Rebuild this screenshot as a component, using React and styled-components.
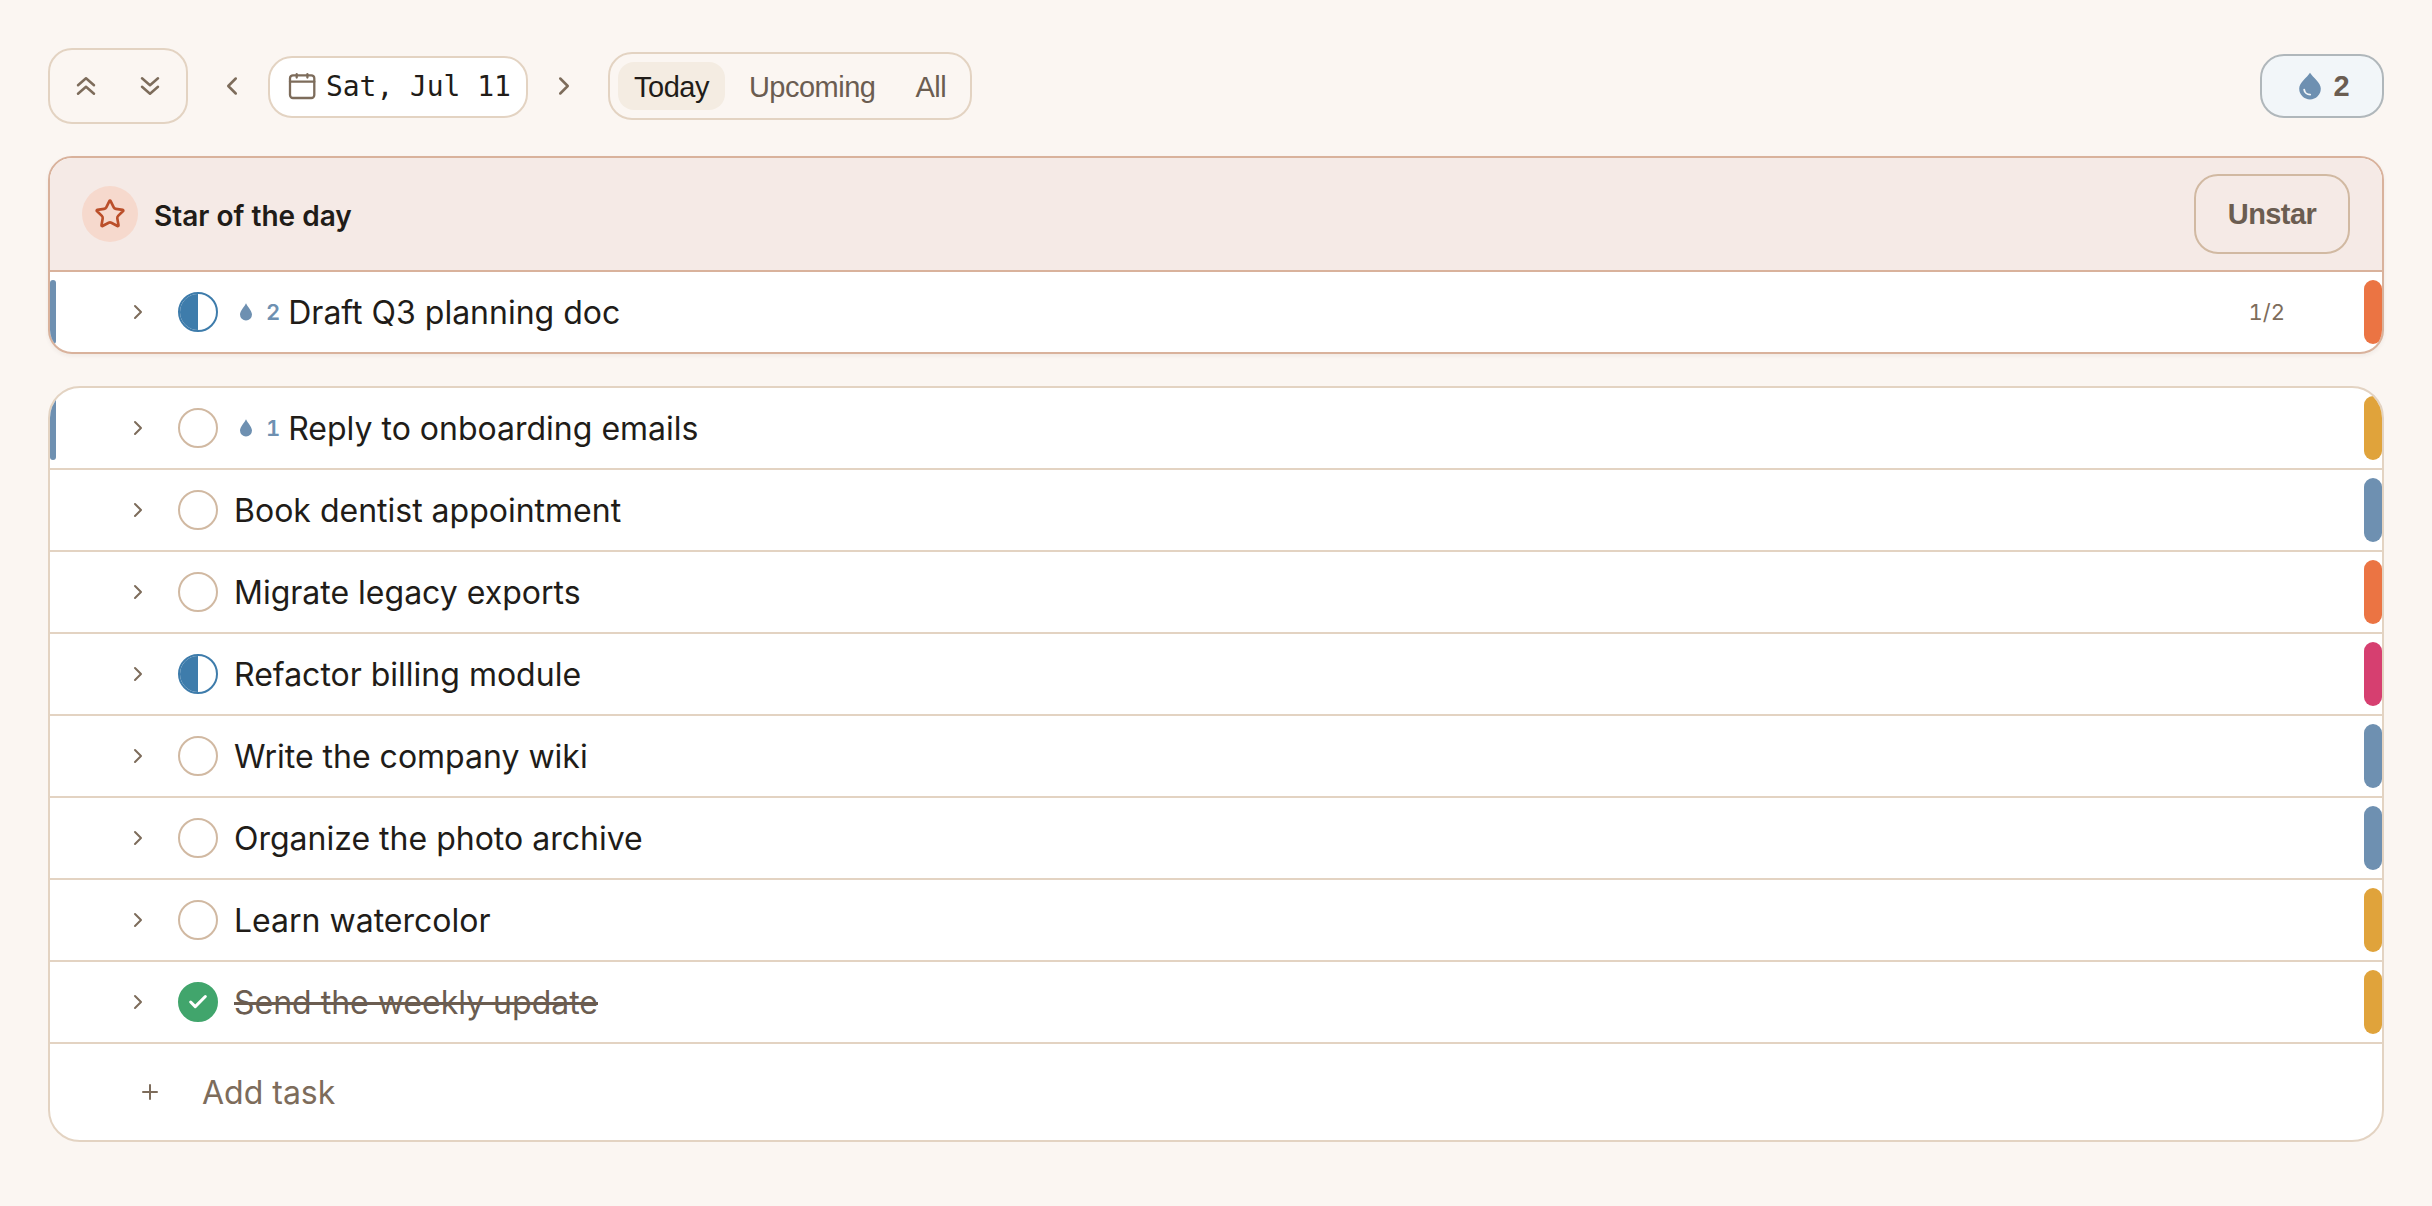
import React, { useState } from 'react';
import styled, { createGlobalStyle } from 'styled-components';
import {
  Check, ChevronLeft, ChevronRight, Plus, Star,
} from 'lucide-react';

const GlobalStyle = createGlobalStyle`
  * {
    box-sizing: border-box;
  }

  body {
    margin: 0;
    background: #fbf6f2;
    color: #211c18;
    font-family: Inter, sans-serif;
  }

  button {
    margin: 0;
    padding: 0;
    border: none;
    background: none;
    color: inherit;
    font: inherit;
    cursor: pointer;
  }

  svg {
    display: block;
    flex: none;
  }
`;

const Page = styled('main')`
  min-height: 1206px;
  padding: 48px;
`;

const Toolbar = styled('header')`
  height: 76px;
  display: flex;
  align-items: center;
  color: #7d6c5b;
`;

const FoldGroup = styled('div')`
  display: flex;
  padding: 4px;
  border: 2px solid #e3d3c2;
  border-radius: 24px;
`;

const FoldButton = styled('button')`
  width: 64px;
  height: 64px;
  display: flex;
  align-items: center;
  justify-content: center;
`;

const DateNav = styled('div')`
  display: flex;
  align-items: center;
  gap: 16px;
  margin: 0 24px;
`;

const StepButton = styled('button')`
  width: 40px;
  height: 40px;
  display: flex;
  align-items: center;
  justify-content: center;
`;

const DateButton = styled('button')`
  width: 260px;
  height: 62px;
  display: flex;
  align-items: center;
  gap: 10px;
  margin-top: 2px;
  padding-left: 18px;
  background: #fff;
  border: 2px solid #e3d3c2;
  border-radius: 24px;

  svg {
    margin-top: -2px;
  }
`;

const DateText = styled('span')`
  color: #211c18;
  font-family: "DejaVu Sans Mono", monospace;
  font-size: 28px;
  line-height: 36px;
  letter-spacing: -0.06px;
  white-space: pre;
`;

const Tabs = styled('nav')`
  display: flex;
  gap: 8px;
  padding: 8px;
  border: 2px solid #e3d3c2;
  border-radius: 24px;
`;

const Tab = styled('button')`
  height: 48px;
  padding: 2px 16px 0;
  border-radius: 16px;
  background: ${props => props.$active ? '#f4ece2' : 'transparent'};
  color: ${props => props.$active ? '#211c18' : '#6b5d51'};
  font-family: "Liberation Sans", sans-serif;
  font-size: 29px;
  letter-spacing: -0.5px;
`;

const DropCounter = styled('div')`
  width: 124px;
  height: 64px;
  margin-left: auto;
  padding-left: 5px;
  display: flex;
  align-items: center;
  justify-content: center;
  gap: 12px;
  background: #f2f6f9;
  border: 2px solid #b0b7bb;
  border-radius: 24px;
  color: #6b5d51;
  font-family: "Liberation Sans", sans-serif;
  font-size: 29px;
  font-weight: 700;
`;

const StarCard = styled('section')`
  margin-top: 32px;
  overflow: hidden;
  background: #fff;
  border: 2px solid #d9b29c;
  border-radius: 24px;
  box-shadow: 0 2px 4px rgba(60, 40, 20, 0.06);
`;

const StarHeader = styled('div')`
  height: 114px;
  display: flex;
  align-items: center;
  gap: 16px;
  padding: 0 32px;
  background: #f5eae6;
  border-bottom: 2px solid #d9b29c;
`;

const StarBadge = styled('div')`
  width: 56px;
  height: 56px;
  display: flex;
  align-items: center;
  justify-content: center;
  border-radius: 50%;
  background: #f6d9cd;
  color: #bb4f2a;
`;

const StarTitle = styled('h2')`
  margin: 0;
  padding-top: 4px;
  flex: 1;
  font-size: 28px;
  font-weight: 600;
`;

const UnstarButton = styled('button')`
  width: 156px;
  height: 80px;
  padding-top: 1px;
  border: 2px solid #d1b9a2;
  border-radius: 24px;
  color: #6b5d51;
  font-family: "Liberation Sans", sans-serif;
  font-size: 29px;
  font-weight: 700;
  letter-spacing: -0.6px;
`;

const ListCard = styled('section')`
  margin-top: 32px;
  overflow: hidden;
  background: #fff;
  border: 2px solid #e3d3c2;
  border-radius: 32px;
`;

const Row = styled('div')`
  height: ${props => props.$divided ? 82 : 80}px;
  display: flex;
  align-items: center;
  border-bottom: ${props => props.$divided ? '2px solid #e3d3c2' : 'none'};
`;

const DropBar = styled('div')`
  width: 6px;
  height: 64px;
  border-radius: 3px;
  background: ${props => props.$visible ? '#6e90b1' : 'transparent'};
`;

const Expand = styled('button')`
  margin: 0 28px 0 70px;
  color: #7d6c5b;
`;

const ringColors = { open: '#d1b9a2', half: '#3e7cab', done: '#41a56c' };
const ringFills = {
  open: '#fff',
  half: 'linear-gradient(90deg, #3e7cab 50%, #fff 50%)',
  done: '#41a56c',
};

const Ring = styled('button')`
  width: 40px;
  height: 40px;
  display: flex;
  align-items: center;
  justify-content: center;
  margin-right: 16px;
  border: 2px solid ${props => ringColors[props.$status]};
  border-radius: 50%;
  background: ${props => ringFills[props.$status]};
  background-clip: ${props => props.$status === 'half' ? 'padding-box' : 'border-box'};
  color: #fff;
`;

const Drops = styled('span')`
  display: flex;
  align-items: center;
  gap: 14px;
  margin: 0 8px 0 6px;
  color: #6e90b1;
  font-size: 22px;
  font-weight: 600;
  font-variant-numeric: tabular-nums;
`;

const TaskName = styled('span')`
  flex: 1;
  padding-top: 2px;
  color: ${props => props.$done ? '#6b5d51' : '#211c18'};
  font-size: 32px;
  line-height: 40px;
  text-decoration: ${props => props.$done ? 'line-through' : 'none'};
`;

const Progress = styled('span')`
  margin-right: 79px;
  color: #7d6c5b;
  font-size: 22px;
  font-variant-numeric: tabular-nums;
`;

const priorities = {
  high: '#eb7443', urgent: '#d63f70', medium: '#e0a33b', low: '#6e90b1',
};

const Priority = styled('div')`
  width: 18px;
  height: 64px;
  border-radius: 9px;
  background: ${props => priorities[props.$level]};
`;

const AddRow = styled('button')`
  width: 100%;
  height: 96px;
  display: flex;
  align-items: center;
  gap: 40px;
  padding-left: 88px;
  color: #7d6c5b;
  font-size: 32px;
`;

const AddLabel = styled('span')`
  padding-top: 1px;
`;

const DoubleChevron = ({ down }) => (
  <svg width="20" height="20" viewBox="0 0 20 20" fill="none" stroke="currentColor" strokeWidth="2.5" strokeLinecap="round" strokeLinejoin="round">
    <path d={down ? 'M2 2.2l8 7 8-7M2 10.8l8 7 8-7' : 'M2 9.2l8-7 8 7M2 17.8l8-7 8 7'} />
  </svg>
);

const CalendarIcon = () => (
  <svg width="28" height="28" viewBox="0 0 28 28" fill="none" stroke="currentColor" strokeWidth="2.3" strokeLinecap="round">
    <rect x="2" y="3.3" width="24.3" height="22.7" rx="3" />
    <path d="M2 9.7h24.3M8.7 2.2v3.3M19.4 2.2v3.3" />
  </svg>
);

const BigDrop = () => (
  <svg width="22" height="28" viewBox="0 0 22 28">
    <path d="M11 0.7C8 5.5 0.2 10.5 0.2 16.6a10.8 10.8 0 0 0 21.6 0C21.8 10.5 14 5.5 11 0.7z" fill="#6e90b1" />
    <path d="M5.2 17.6a6 5.4 0 0 0 6 5" fill="none" stroke="#f2f6f9" strokeWidth="1.8" strokeLinecap="round" />
  </svg>
);

const SmallDrop = () => (
  <svg width="12" height="18" viewBox="0 0 12 18">
    <path d="M6 0.2C4.6 3.6 0 7.6 0 11.6a6 6 0 0 0 12 0C12 7.6 7.4 3.6 6 0.2z" fill="currentColor" />
  </svg>
);

const TaskRow = ({ task, divided }) => (
  <Row $divided={divided}>
    <DropBar $visible={task.drops > 0} />
    <Expand><ChevronRight size={24} strokeWidth={2} /></Expand>
    <Ring $status={task.status}>
      {task.status === 'done' && <Check size={22} strokeWidth={3.3} />}
    </Ring>
    {task.drops && (
      <Drops>
        <SmallDrop />
        {task.drops}
      </Drops>
    )}
    <TaskName $done={task.status === 'done'}>{task.name}</TaskName>
    {task.progress && <Progress>{task.progress}</Progress>}
    <Priority $level={task.priority} />
  </Row>
);

const starred = {
  name: 'Draft Q3 planning doc', status: 'half', drops: 2, progress: '1/2', priority: 'high',
};

const tasks = [
  { name: 'Reply to onboarding emails', status: 'open', drops: 1, priority: 'medium' },
  { name: 'Book dentist appointment', status: 'open', priority: 'low' },
  { name: 'Migrate legacy exports', status: 'open', priority: 'high' },
  { name: 'Refactor billing module', status: 'half', priority: 'urgent' },
  { name: 'Write the company wiki', status: 'open', priority: 'low' },
  { name: 'Organize the photo archive', status: 'open', priority: 'low' },
  { name: 'Learn watercolor', status: 'open', priority: 'medium' },
  { name: 'Send the weekly update', status: 'done', priority: 'medium' },
];

const tabs = ['Today', 'Upcoming', 'All'];

const App = () => {
  const [activeTab, setActiveTab] = useState('Today');

  return (
    <Page>
      <GlobalStyle />
      <Toolbar>
        <FoldGroup>
          <FoldButton><DoubleChevron /></FoldButton>
          <FoldButton><DoubleChevron down /></FoldButton>
        </FoldGroup>
        <DateNav>
          <StepButton><ChevronLeft size={30} /></StepButton>
          <DateButton>
            <CalendarIcon />
            <DateText>Sat, Jul 11</DateText>
          </DateButton>
          <StepButton><ChevronRight size={30} /></StepButton>
        </DateNav>
        <Tabs>
          {tabs.map((tab) => (
            <Tab
              key={tab}
              $active={tab === activeTab}
              onClick={() => setActiveTab(tab)}
            >
              {tab}
            </Tab>
          ))}
        </Tabs>
        <DropCounter>
          <BigDrop />
          2
        </DropCounter>
      </Toolbar>
      <StarCard>
        <StarHeader>
          <StarBadge><Star size={32} /></StarBadge>
          <StarTitle>Star of the day</StarTitle>
          <UnstarButton>Unstar</UnstarButton>
        </StarHeader>
        <TaskRow task={starred} />
      </StarCard>
      <ListCard>
        {tasks.map((task) => (
          <TaskRow key={task.name} task={task} divided />
        ))}
        <AddRow>
          <Plus size={24} />
          <AddLabel>Add task</AddLabel>
        </AddRow>
      </ListCard>
    </Page>
  );
};

export default App;
